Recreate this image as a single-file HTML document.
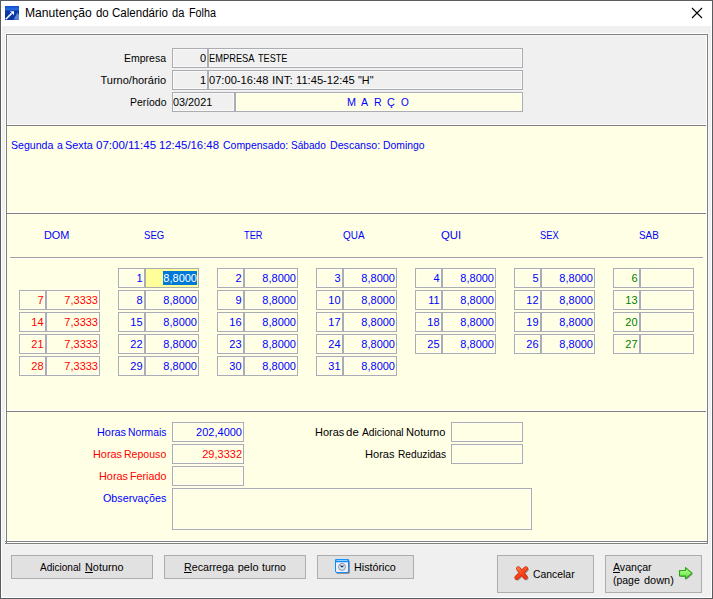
<!DOCTYPE html>
<html lang="pt-BR"><head><meta charset="utf-8"><title>Manutenção do Calendário da Folha</title>
<style>
html,body{margin:0;padding:0;}
body{width:713px;height:599px;overflow:hidden;position:relative;background:#f0f0f0;font-family:"Liberation Sans",sans-serif;}
#w{position:absolute;left:0;top:0;width:713px;height:599px;overflow:hidden;}
#w div,#w span,#w svg{position:absolute;}
.t{white-space:nowrap;font-size:11px;line-height:13px;}
.f{border:1px solid #abadb3;}
.b{border:1px solid #adadad;background:#e1e1e1;}
u{text-decoration:underline;text-underline-offset:1px;}
</style></head>
<body><div id="w">
<div style="left:0px;top:0px;width:713px;height:599px;background:#fff;"></div>
<div style="left:2px;top:26px;width:709px;height:571px;background:#f0f0f0;"></div>
<div style="left:0px;top:0px;width:713px;height:1px;background:#5a5d60;"></div>
<div style="left:0px;top:598px;width:713px;height:1px;background:#5a5d60;"></div>
<div style="left:0px;top:0px;width:1px;height:599px;background:#5a5d60;"></div>
<div style="left:712px;top:0px;width:1px;height:599px;background:#5a5d60;"></div>
<svg style="left:5px;top:6px" width="14" height="14" viewBox="0 0 14 14">
<defs><linearGradient id="gi" x1="0" y1="0" x2="0" y2="1"><stop offset="0" stop-color="#0d4fd0"/><stop offset="0.28" stop-color="#2f6fdc"/><stop offset="0.34" stop-color="#0a3aa8"/><stop offset="1" stop-color="#0433a6"/></linearGradient></defs>
<rect x="0" y="0" width="14" height="14" fill="url(#gi)"/>
<path d="M0.8 13.2 L6.6 7.4" stroke="#fff" stroke-width="1.5" fill="none"/>
<path d="M5 5.2 L9 5.2 L9 9.2 Z" fill="#fff"/>
<path d="M8.5 13.5 L12.5 6.5 L14 9 L14 14 Z" fill="#7f9ee0" opacity="0.75"/>
</svg>
<svg style="left:691px;top:7px" width="12" height="12" viewBox="0 0 12 12"><path d="M1 1 L11 11 M11 1 L1 11" stroke="#000" stroke-width="1.1" fill="none"/></svg>
<span id="title_0" class="t" style="top:5px;color:#000;left:24.99px;font-size:12px;line-height:16px;transform:scaleX(1.0104);transform-origin:0 0;">Manutenção</span>
<span id="title_1" class="t" style="top:5px;color:#000;left:95.50px;font-size:12px;line-height:16px;transform:scaleX(0.9549);transform-origin:0 0;">do</span>
<span id="title_2" class="t" style="top:5px;color:#000;left:112.04px;font-size:12px;line-height:16px;transform:scaleX(0.9626);transform-origin:0 0;">Calendário</span>
<span id="title_3" class="t" style="top:5px;color:#000;left:172.39px;font-size:12px;line-height:16px;transform:scaleX(0.9243);transform-origin:0 0;">da</span>
<span id="title_4" class="t" style="top:5px;color:#000;left:188.96px;font-size:12px;line-height:16px;transform:scaleX(0.8982);transform-origin:0 0;">Folha</span>
<div style="left:5px;top:33px;width:702px;height:1px;background:#fff;"></div>
<div style="left:5px;top:33px;width:1px;height:511px;background:#fff;"></div>
<div style="left:5px;top:544px;width:704px;height:1px;background:#f6f6f6;"></div>
<div style="left:708px;top:33px;width:1px;height:512px;background:#f6f6f6;"></div>
<div style="left:6px;top:34px;width:702px;height:510px;background:#808080;"></div>
<div style="left:7px;top:35px;width:700px;height:90px;background:#f7f7f7;"></div>
<div style="left:7px;top:124px;width:700px;height:1px;background:#fff;"></div>
<div style="left:706px;top:35px;width:1px;height:90px;background:#fff;"></div>
<div style="left:7px;top:35px;width:1px;height:1px;background:#fff;"></div>
<div style="left:8px;top:36px;width:698px;height:88px;background:#f0f0f0;"></div>
<div style="left:7px;top:126px;width:699px;height:86px;background:#ffffe6;"></div>
<div style="left:7px;top:212px;width:700px;height:1px;background:#fff;"></div>
<div style="left:706px;top:125px;width:1px;height:88px;background:#fff;"></div>
<div style="left:7px;top:214px;width:699px;height:196px;background:#ffffe6;"></div>
<div style="left:7px;top:410px;width:700px;height:1px;background:#fff;"></div>
<div style="left:706px;top:213px;width:1px;height:198px;background:#fff;"></div>
<div style="left:7px;top:412px;width:699px;height:128px;background:#ffffe6;"></div>
<div style="left:7px;top:540px;width:700px;height:1px;background:#fff;"></div>
<div style="left:706px;top:411px;width:1px;height:130px;background:#fff;"></div>
<div style="left:7px;top:542px;width:700px;height:1px;background:#fff;"></div>
<div style="left:5px;top:542px;width:1px;height:1px;background:#fff;"></div>
<div style="left:5px;top:541px;width:703px;height:1px;background:#808080;"></div>
<div style="left:5px;top:543px;width:703px;height:1px;background:#808080;"></div>
<span id="l_emp_0" class="t" style="top:52px;color:#000;left:124.44px;transform:scaleX(0.9543);transform-origin:0 0;">Empresa</span>
<span id="l_tur_0" class="t" style="top:74px;color:#000;left:100.50px;">Turno/horário</span>
<span id="l_per_0" class="t" style="top:96px;color:#000;left:130.16px;transform:scaleX(0.9457);transform-origin:0 0;">Período</span>
<div class="f" style="left:172px;top:48px;width:34px;height:18px;background:#f0f0f0;box-shadow:inset 0 0 0 1px #f8f8f8;"></div>
<div class="f" style="left:208px;top:48px;width:313px;height:18px;background:#f0f0f0;box-shadow:inset 0 0 0 1px #f8f8f8;"></div>
<div class="f" style="left:172px;top:70px;width:34px;height:18px;background:#f0f0f0;box-shadow:inset 0 0 0 1px #f8f8f8;"></div>
<div class="f" style="left:208px;top:70px;width:313px;height:18px;background:#f0f0f0;box-shadow:inset 0 0 0 1px #f8f8f8;"></div>
<div class="f" style="left:172px;top:92px;width:61px;height:18px;background:#f0f0f0;box-shadow:inset 0 0 0 1px #f8f8f8;"></div>
<div class="f" style="left:235px;top:92px;width:286px;height:18px;background:#ffffe6;box-shadow:inset 0 0 0 1px #fffff4;"></div>
<span id="v_0" class="t " style="top:52px;color:#000;right:507px;">0</span>
<span id="v_1" class="t " style="top:74px;color:#000;right:507px;">1</span>
<span id="v_emp_0" class="t" style="top:52px;color:#000;left:209.27px;transform:scaleX(0.8458);transform-origin:0 0;">EMPRESA</span>
<span id="v_emp_1" class="t" style="top:52px;color:#000;left:257.78px;transform:scaleX(0.8299);transform-origin:0 0;">TESTE</span>
<span id="v_tur_0" class="t" style="top:74px;color:#000;left:209.19px;transform:scaleX(1.0108);transform-origin:0 0;">07:00-16:48</span>
<span id="v_tur_1" class="t" style="top:74px;color:#000;left:271.96px;transform:scaleX(1.0574);transform-origin:0 0;">INT:</span>
<span id="v_tur_2" class="t" style="top:74px;color:#000;left:295.64px;transform:scaleX(1.0154);transform-origin:0 0;">11:45-12:45</span>
<span id="v_tur_3" class="t" style="top:74px;color:#000;left:358.34px;transform:scaleX(0.9838);transform-origin:0 0;">"H"</span>
<span id="v_per_0" class="t" style="top:96px;color:#000;left:172.98px;transform:scaleX(0.9856);transform-origin:0 0;">03/2021</span>
<span id="v_mes_0" class="t" style="top:96px;color:#00f;left:346.89px;transform:scaleX(0.9817);transform-origin:0 0;">M</span>
<span id="v_mes_1" class="t" style="top:96px;color:#00f;left:361.39px;transform:scaleX(0.9568);transform-origin:0 0;">A</span>
<span id="v_mes_2" class="t" style="top:96px;color:#00f;left:374.05px;transform:scaleX(0.9581);transform-origin:0 0;">R</span>
<span id="v_mes_3" class="t" style="top:96px;color:#00f;left:387.15px;transform:scaleX(0.9821);transform-origin:0 0;">Ç</span>
<span id="v_mes_4" class="t" style="top:96px;color:#00f;left:400.86px;transform:scaleX(0.9097);transform-origin:0 0;">O</span>
<span id="desc_0" class="t" style="top:139px;color:#00f;left:11.32px;transform:scaleX(0.9606);transform-origin:0 0;">Segunda</span>
<span id="desc_1" class="t" style="top:139px;color:#00f;left:57.28px;transform:scaleX(0.9506);transform-origin:0 0;">a</span>
<span id="desc_2" class="t" style="top:139px;color:#00f;left:65.09px;transform:scaleX(0.9848);transform-origin:0 0;">Sexta</span>
<span id="desc_3" class="t" style="top:139px;color:#00f;left:96.11px;transform:scaleX(1.0484);transform-origin:0 0;">07:00/11:45</span>
<span id="desc_4" class="t" style="top:139px;color:#00f;left:159.33px;transform:scaleX(1.0315);transform-origin:0 0;">12:45/16:48</span>
<span id="desc_5" class="t" style="top:139px;color:#00f;left:223.20px;transform:scaleX(0.9523);transform-origin:0 0;">Compensado:</span>
<span id="desc_6" class="t" style="top:139px;color:#00f;left:291.00px;transform:scaleX(0.9161);transform-origin:0 0;">Sábado</span>
<span id="desc_7" class="t" style="top:139px;color:#00f;left:330.03px;transform:scaleX(0.9655);transform-origin:0 0;">Descanso:</span>
<span id="desc_8" class="t" style="top:139px;color:#00f;left:382.72px;transform:scaleX(0.9443);transform-origin:0 0;">Domingo</span>
<span id="h_DOM_0" class="t" style="top:229px;color:#00f;left:44.15px;transform:scaleX(0.9901);transform-origin:0 0;">DOM</span>
<span id="h_SEG_0" class="t" style="top:229px;color:#00f;left:143.94px;transform:scaleX(0.8733);transform-origin:0 0;">SEG</span>
<span id="h_TER_0" class="t" style="top:229px;color:#00f;left:244.02px;transform:scaleX(0.8390);transform-origin:0 0;">TER</span>
<span id="h_QUA_0" class="t" style="top:229px;color:#00f;left:342.79px;transform:scaleX(0.9038);transform-origin:0 0;">QUA</span>
<span id="h_QUI_0" class="t" style="top:229px;color:#00f;left:441.31px;transform:scaleX(1.0306);transform-origin:0 0;">QUI</span>
<span id="h_SEX_0" class="t" style="top:229px;color:#00f;left:540.44px;transform:scaleX(0.8445);transform-origin:0 0;">SEX</span>
<span id="h_SAB_0" class="t" style="top:229px;color:#00f;left:639.38px;transform:scaleX(0.8994);transform-origin:0 0;">SAB</span>
<div style="left:10px;top:257px;width:693px;height:1px;background:#a0a0a0;"></div>
<div style="left:10px;top:258px;width:693px;height:1px;background:#fff;"></div>
<div class="f" style="left:118px;top:268px;width:25px;height:18px;background:#ffffe6;box-shadow:inset 0 0 0 1px #fffff4;"></div>
<div class="f" style="left:145px;top:268px;width:52px;height:18px;background:#ffff99;box-shadow:inset 0 0 0 1px #ffff99;"></div>
<span id="d1" class="t " style="top:272px;color:#00f;right:570.4px;">1</span>
<div style="left:163px;top:271px;width:34px;height:14px;background:#0078d7;"></div>
<span id="v1" class="t " style="top:272px;color:#fff;right:516px;">8,8000</span>
<div class="f" style="left:217px;top:268px;width:25px;height:18px;background:#ffffe6;box-shadow:inset 0 0 0 1px #fffff4;"></div>
<div class="f" style="left:244px;top:268px;width:52px;height:18px;background:#ffffe6;box-shadow:inset 0 0 0 1px #fffff4;"></div>
<span id="d2" class="t " style="top:272px;color:#00f;right:471.4px;">2</span>
<span id="v2" class="t " style="top:272px;color:#00f;right:417px;">8,8000</span>
<div class="f" style="left:316px;top:268px;width:25px;height:18px;background:#ffffe6;box-shadow:inset 0 0 0 1px #fffff4;"></div>
<div class="f" style="left:343px;top:268px;width:52px;height:18px;background:#ffffe6;box-shadow:inset 0 0 0 1px #fffff4;"></div>
<span id="d3" class="t " style="top:272px;color:#00f;right:372.4px;">3</span>
<span id="v3" class="t " style="top:272px;color:#00f;right:318px;">8,8000</span>
<div class="f" style="left:415px;top:268px;width:25px;height:18px;background:#ffffe6;box-shadow:inset 0 0 0 1px #fffff4;"></div>
<div class="f" style="left:442px;top:268px;width:52px;height:18px;background:#ffffe6;box-shadow:inset 0 0 0 1px #fffff4;"></div>
<span id="d4" class="t " style="top:272px;color:#00f;right:273.4px;">4</span>
<span id="v4" class="t " style="top:272px;color:#00f;right:219px;">8,8000</span>
<div class="f" style="left:514px;top:268px;width:25px;height:18px;background:#ffffe6;box-shadow:inset 0 0 0 1px #fffff4;"></div>
<div class="f" style="left:541px;top:268px;width:52px;height:18px;background:#ffffe6;box-shadow:inset 0 0 0 1px #fffff4;"></div>
<span id="d5" class="t " style="top:272px;color:#00f;right:174.39999999999998px;">5</span>
<span id="v5" class="t " style="top:272px;color:#00f;right:120px;">8,8000</span>
<div class="f" style="left:613px;top:268px;width:25px;height:18px;background:#ffffe6;box-shadow:inset 0 0 0 1px #fffff4;"></div>
<div class="f" style="left:640px;top:268px;width:52px;height:18px;background:#ffffe6;box-shadow:inset 0 0 0 1px #fffff4;"></div>
<span id="d6" class="t " style="top:272px;color:#008000;right:75.39999999999998px;">6</span>
<div class="f" style="left:19px;top:290px;width:25px;height:18px;background:#ffffe6;box-shadow:inset 0 0 0 1px #fffff4;"></div>
<div class="f" style="left:46px;top:290px;width:52px;height:18px;background:#ffffe6;box-shadow:inset 0 0 0 1px #fffff4;"></div>
<span id="d7" class="t " style="top:294px;color:#f00;right:669.4px;">7</span>
<span id="v7" class="t " style="top:294px;color:#f00;right:615px;">7,3333</span>
<div class="f" style="left:118px;top:290px;width:25px;height:18px;background:#ffffe6;box-shadow:inset 0 0 0 1px #fffff4;"></div>
<div class="f" style="left:145px;top:290px;width:52px;height:18px;background:#ffffe6;box-shadow:inset 0 0 0 1px #fffff4;"></div>
<span id="d8" class="t " style="top:294px;color:#00f;right:570.4px;">8</span>
<span id="v8" class="t " style="top:294px;color:#00f;right:516px;">8,8000</span>
<div class="f" style="left:217px;top:290px;width:25px;height:18px;background:#ffffe6;box-shadow:inset 0 0 0 1px #fffff4;"></div>
<div class="f" style="left:244px;top:290px;width:52px;height:18px;background:#ffffe6;box-shadow:inset 0 0 0 1px #fffff4;"></div>
<span id="d9" class="t " style="top:294px;color:#00f;right:471.4px;">9</span>
<span id="v9" class="t " style="top:294px;color:#00f;right:417px;">8,8000</span>
<div class="f" style="left:316px;top:290px;width:25px;height:18px;background:#ffffe6;box-shadow:inset 0 0 0 1px #fffff4;"></div>
<div class="f" style="left:343px;top:290px;width:52px;height:18px;background:#ffffe6;box-shadow:inset 0 0 0 1px #fffff4;"></div>
<span id="d10" class="t " style="top:294px;color:#00f;right:372.4px;">10</span>
<span id="v10" class="t " style="top:294px;color:#00f;right:318px;">8,8000</span>
<div class="f" style="left:415px;top:290px;width:25px;height:18px;background:#ffffe6;box-shadow:inset 0 0 0 1px #fffff4;"></div>
<div class="f" style="left:442px;top:290px;width:52px;height:18px;background:#ffffe6;box-shadow:inset 0 0 0 1px #fffff4;"></div>
<span id="d11" class="t " style="top:294px;color:#00f;right:273.4px;">11</span>
<span id="v11" class="t " style="top:294px;color:#00f;right:219px;">8,8000</span>
<div class="f" style="left:514px;top:290px;width:25px;height:18px;background:#ffffe6;box-shadow:inset 0 0 0 1px #fffff4;"></div>
<div class="f" style="left:541px;top:290px;width:52px;height:18px;background:#ffffe6;box-shadow:inset 0 0 0 1px #fffff4;"></div>
<span id="d12" class="t " style="top:294px;color:#00f;right:174.39999999999998px;">12</span>
<span id="v12" class="t " style="top:294px;color:#00f;right:120px;">8,8000</span>
<div class="f" style="left:613px;top:290px;width:25px;height:18px;background:#ffffe6;box-shadow:inset 0 0 0 1px #fffff4;"></div>
<div class="f" style="left:640px;top:290px;width:52px;height:18px;background:#ffffe6;box-shadow:inset 0 0 0 1px #fffff4;"></div>
<span id="d13" class="t " style="top:294px;color:#008000;right:75.39999999999998px;">13</span>
<div class="f" style="left:19px;top:312px;width:25px;height:18px;background:#ffffe6;box-shadow:inset 0 0 0 1px #fffff4;"></div>
<div class="f" style="left:46px;top:312px;width:52px;height:18px;background:#ffffe6;box-shadow:inset 0 0 0 1px #fffff4;"></div>
<span id="d14" class="t " style="top:316px;color:#f00;right:669.4px;">14</span>
<span id="v14" class="t " style="top:316px;color:#f00;right:615px;">7,3333</span>
<div class="f" style="left:118px;top:312px;width:25px;height:18px;background:#ffffe6;box-shadow:inset 0 0 0 1px #fffff4;"></div>
<div class="f" style="left:145px;top:312px;width:52px;height:18px;background:#ffffe6;box-shadow:inset 0 0 0 1px #fffff4;"></div>
<span id="d15" class="t " style="top:316px;color:#00f;right:570.4px;">15</span>
<span id="v15" class="t " style="top:316px;color:#00f;right:516px;">8,8000</span>
<div class="f" style="left:217px;top:312px;width:25px;height:18px;background:#ffffe6;box-shadow:inset 0 0 0 1px #fffff4;"></div>
<div class="f" style="left:244px;top:312px;width:52px;height:18px;background:#ffffe6;box-shadow:inset 0 0 0 1px #fffff4;"></div>
<span id="d16" class="t " style="top:316px;color:#00f;right:471.4px;">16</span>
<span id="v16" class="t " style="top:316px;color:#00f;right:417px;">8,8000</span>
<div class="f" style="left:316px;top:312px;width:25px;height:18px;background:#ffffe6;box-shadow:inset 0 0 0 1px #fffff4;"></div>
<div class="f" style="left:343px;top:312px;width:52px;height:18px;background:#ffffe6;box-shadow:inset 0 0 0 1px #fffff4;"></div>
<span id="d17" class="t " style="top:316px;color:#00f;right:372.4px;">17</span>
<span id="v17" class="t " style="top:316px;color:#00f;right:318px;">8,8000</span>
<div class="f" style="left:415px;top:312px;width:25px;height:18px;background:#ffffe6;box-shadow:inset 0 0 0 1px #fffff4;"></div>
<div class="f" style="left:442px;top:312px;width:52px;height:18px;background:#ffffe6;box-shadow:inset 0 0 0 1px #fffff4;"></div>
<span id="d18" class="t " style="top:316px;color:#00f;right:273.4px;">18</span>
<span id="v18" class="t " style="top:316px;color:#00f;right:219px;">8,8000</span>
<div class="f" style="left:514px;top:312px;width:25px;height:18px;background:#ffffe6;box-shadow:inset 0 0 0 1px #fffff4;"></div>
<div class="f" style="left:541px;top:312px;width:52px;height:18px;background:#ffffe6;box-shadow:inset 0 0 0 1px #fffff4;"></div>
<span id="d19" class="t " style="top:316px;color:#00f;right:174.39999999999998px;">19</span>
<span id="v19" class="t " style="top:316px;color:#00f;right:120px;">8,8000</span>
<div class="f" style="left:613px;top:312px;width:25px;height:18px;background:#ffffe6;box-shadow:inset 0 0 0 1px #fffff4;"></div>
<div class="f" style="left:640px;top:312px;width:52px;height:18px;background:#ffffe6;box-shadow:inset 0 0 0 1px #fffff4;"></div>
<span id="d20" class="t " style="top:316px;color:#008000;right:75.39999999999998px;">20</span>
<div class="f" style="left:19px;top:334px;width:25px;height:18px;background:#ffffe6;box-shadow:inset 0 0 0 1px #fffff4;"></div>
<div class="f" style="left:46px;top:334px;width:52px;height:18px;background:#ffffe6;box-shadow:inset 0 0 0 1px #fffff4;"></div>
<span id="d21" class="t " style="top:338px;color:#f00;right:669.4px;">21</span>
<span id="v21" class="t " style="top:338px;color:#f00;right:615px;">7,3333</span>
<div class="f" style="left:118px;top:334px;width:25px;height:18px;background:#ffffe6;box-shadow:inset 0 0 0 1px #fffff4;"></div>
<div class="f" style="left:145px;top:334px;width:52px;height:18px;background:#ffffe6;box-shadow:inset 0 0 0 1px #fffff4;"></div>
<span id="d22" class="t " style="top:338px;color:#00f;right:570.4px;">22</span>
<span id="v22" class="t " style="top:338px;color:#00f;right:516px;">8,8000</span>
<div class="f" style="left:217px;top:334px;width:25px;height:18px;background:#ffffe6;box-shadow:inset 0 0 0 1px #fffff4;"></div>
<div class="f" style="left:244px;top:334px;width:52px;height:18px;background:#ffffe6;box-shadow:inset 0 0 0 1px #fffff4;"></div>
<span id="d23" class="t " style="top:338px;color:#00f;right:471.4px;">23</span>
<span id="v23" class="t " style="top:338px;color:#00f;right:417px;">8,8000</span>
<div class="f" style="left:316px;top:334px;width:25px;height:18px;background:#ffffe6;box-shadow:inset 0 0 0 1px #fffff4;"></div>
<div class="f" style="left:343px;top:334px;width:52px;height:18px;background:#ffffe6;box-shadow:inset 0 0 0 1px #fffff4;"></div>
<span id="d24" class="t " style="top:338px;color:#00f;right:372.4px;">24</span>
<span id="v24" class="t " style="top:338px;color:#00f;right:318px;">8,8000</span>
<div class="f" style="left:415px;top:334px;width:25px;height:18px;background:#ffffe6;box-shadow:inset 0 0 0 1px #fffff4;"></div>
<div class="f" style="left:442px;top:334px;width:52px;height:18px;background:#ffffe6;box-shadow:inset 0 0 0 1px #fffff4;"></div>
<span id="d25" class="t " style="top:338px;color:#00f;right:273.4px;">25</span>
<span id="v25" class="t " style="top:338px;color:#00f;right:219px;">8,8000</span>
<div class="f" style="left:514px;top:334px;width:25px;height:18px;background:#ffffe6;box-shadow:inset 0 0 0 1px #fffff4;"></div>
<div class="f" style="left:541px;top:334px;width:52px;height:18px;background:#ffffe6;box-shadow:inset 0 0 0 1px #fffff4;"></div>
<span id="d26" class="t " style="top:338px;color:#00f;right:174.39999999999998px;">26</span>
<span id="v26" class="t " style="top:338px;color:#00f;right:120px;">8,8000</span>
<div class="f" style="left:613px;top:334px;width:25px;height:18px;background:#ffffe6;box-shadow:inset 0 0 0 1px #fffff4;"></div>
<div class="f" style="left:640px;top:334px;width:52px;height:18px;background:#ffffe6;box-shadow:inset 0 0 0 1px #fffff4;"></div>
<span id="d27" class="t " style="top:338px;color:#008000;right:75.39999999999998px;">27</span>
<div class="f" style="left:19px;top:356px;width:25px;height:18px;background:#ffffe6;box-shadow:inset 0 0 0 1px #fffff4;"></div>
<div class="f" style="left:46px;top:356px;width:52px;height:18px;background:#ffffe6;box-shadow:inset 0 0 0 1px #fffff4;"></div>
<span id="d28" class="t " style="top:360px;color:#f00;right:669.4px;">28</span>
<span id="v28" class="t " style="top:360px;color:#f00;right:615px;">7,3333</span>
<div class="f" style="left:118px;top:356px;width:25px;height:18px;background:#ffffe6;box-shadow:inset 0 0 0 1px #fffff4;"></div>
<div class="f" style="left:145px;top:356px;width:52px;height:18px;background:#ffffe6;box-shadow:inset 0 0 0 1px #fffff4;"></div>
<span id="d29" class="t " style="top:360px;color:#00f;right:570.4px;">29</span>
<span id="v29" class="t " style="top:360px;color:#00f;right:516px;">8,8000</span>
<div class="f" style="left:217px;top:356px;width:25px;height:18px;background:#ffffe6;box-shadow:inset 0 0 0 1px #fffff4;"></div>
<div class="f" style="left:244px;top:356px;width:52px;height:18px;background:#ffffe6;box-shadow:inset 0 0 0 1px #fffff4;"></div>
<span id="d30" class="t " style="top:360px;color:#00f;right:471.4px;">30</span>
<span id="v30" class="t " style="top:360px;color:#00f;right:417px;">8,8000</span>
<div class="f" style="left:316px;top:356px;width:25px;height:18px;background:#ffffe6;box-shadow:inset 0 0 0 1px #fffff4;"></div>
<div class="f" style="left:343px;top:356px;width:52px;height:18px;background:#ffffe6;box-shadow:inset 0 0 0 1px #fffff4;"></div>
<span id="d31" class="t " style="top:360px;color:#00f;right:372.4px;">31</span>
<span id="v31" class="t " style="top:360px;color:#00f;right:318px;">8,8000</span>
<span id="l_hn_0" class="t" style="top:426px;color:#00f;left:96.62px;transform:scaleX(0.9904);transform-origin:0 0;">Horas</span>
<span id="l_hn_1" class="t" style="top:426px;color:#00f;left:128.46px;transform:scaleX(0.9357);transform-origin:0 0;">Normais</span>
<span id="l_hr_0" class="t" style="top:448px;color:#f00;left:92.78px;transform:scaleX(0.9903);transform-origin:0 0;">Horas</span>
<span id="l_hr_1" class="t" style="top:448px;color:#f00;left:124.42px;transform:scaleX(0.9594);transform-origin:0 0;">Repouso</span>
<span id="l_hf_0" class="t" style="top:470px;color:#f00;left:98.98px;transform:scaleX(0.9874);transform-origin:0 0;">Horas</span>
<span id="l_hf_1" class="t" style="top:470px;color:#f00;left:130.22px;transform:scaleX(0.9760);transform-origin:0 0;">Feriado</span>
<span id="l_ob_0" class="t" style="top:492px;color:#00f;left:103.32px;transform:scaleX(0.9763);transform-origin:0 0;">Observações</span>
<div class="f" style="left:172px;top:422px;width:70px;height:18px;background:#ffffe6;box-shadow:inset 0 0 0 1px #fffff4;"></div>
<div class="f" style="left:172px;top:444px;width:70px;height:18px;background:#ffffe6;box-shadow:inset 0 0 0 1px #fffff4;"></div>
<div class="f" style="left:172px;top:466px;width:70px;height:18px;background:#ffffe6;box-shadow:inset 0 0 0 1px #fffff4;"></div>
<div class="f" style="left:172px;top:488px;width:358px;height:40px;background:#ffffe6;box-shadow:inset 0 0 0 1px #fffff4;"></div>
<span id="v_hn" class="t " style="top:426px;color:#00f;right:471px;">202,4000</span>
<span id="v_hr" class="t " style="top:448px;color:#f00;right:471px;">29,3332</span>
<span id="l_an_0" class="t" style="top:426px;color:#000;left:314.60px;transform:scaleX(0.9991);transform-origin:0 0;">Horas</span>
<span id="l_an_1" class="t" style="top:426px;color:#000;left:346.04px;transform:scaleX(1.0424);transform-origin:0 0;">de</span>
<span id="l_an_2" class="t" style="top:426px;color:#000;left:361.75px;transform:scaleX(0.9329);transform-origin:0 0;">Adicional</span>
<span id="l_an_3" class="t" style="top:426px;color:#000;left:405.67px;transform:scaleX(1.0077);transform-origin:0 0;">Noturno</span>
<span id="l_rd_0" class="t" style="top:448px;color:#000;left:365.27px;transform:scaleX(1.0078);transform-origin:0 0;">Horas</span>
<span id="l_rd_1" class="t" style="top:448px;color:#000;left:398.02px;transform:scaleX(0.9248);transform-origin:0 0;">Reduzidas</span>
<div class="f" style="left:451px;top:422px;width:70px;height:18px;background:#ffffe6;box-shadow:inset 0 0 0 1px #fffff4;"></div>
<div class="f" style="left:451px;top:444px;width:70px;height:18px;background:#ffffe6;box-shadow:inset 0 0 0 1px #fffff4;"></div>
<div class="b" style="left:11px;top:555px;width:140px;height:22px;"></div>
<div class="b" style="left:164px;top:555px;width:140px;height:22px;"></div>
<div class="b" style="left:317px;top:555px;width:95px;height:22px;"></div>
<div class="b" style="left:497px;top:555px;width:95px;height:36px;"></div>
<div class="b" style="left:605px;top:555px;width:95px;height:36px;"></div>
<span id="b_an_0" class="t" style="top:561px;color:#000;left:39.76px;transform:scaleX(0.9137);transform-origin:0 0;">Adicional</span>
<span id="b_an_1" class="t" style="top:561px;color:#000;left:84.56px;transform:scaleX(0.9876);transform-origin:0 0;"><u>N</u>oturno</span>
<span id="b_rt_0" class="t" style="top:561px;color:#000;left:183.72px;transform:scaleX(0.9699);transform-origin:0 0;"><u>R</u>ecarrega</span>
<span id="b_rt_1" class="t" style="top:561px;color:#000;left:237.71px;">pelo</span>
<span id="b_rt_2" class="t" style="top:561px;color:#000;left:262.43px;transform:scaleX(0.9506);transform-origin:0 0;">turno</span>
<span id="b_hi_0" class="t" style="top:561px;color:#000;left:353.97px;transform:scaleX(0.9761);transform-origin:0 0;">Histórico</span>
<span id="b_ca_0" class="t" style="top:568px;color:#000;left:533.45px;transform:scaleX(0.9454);transform-origin:0 0;">Cancelar</span>
<span id="b_av_0" class="t" style="top:561px;color:#000;left:612.60px;transform:scaleX(0.9619);transform-origin:0 0;"><u>A</u>vançar</span>
<span id="b_pd_0" class="t" style="top:574px;color:#000;left:612.70px;transform:scaleX(0.9506);transform-origin:0 0;">(page</span>
<span id="b_pd_1" class="t" style="top:574px;color:#000;left:643.53px;transform:scaleX(0.9951);transform-origin:0 0;">down)</span>
<svg style="left:335px;top:559px" width="16" height="16" viewBox="0 0 16 16">
<rect x="1.2" y="1.2" width="13.6" height="13.6" rx="1.6" fill="#3a3a44" opacity="0.6"/>
<rect x="0.5" y="0.5" width="13" height="13" rx="1.4" fill="#f3eeff" stroke="#0a8cff" stroke-width="1"/>
<rect x="0" y="0" width="14" height="3.2" rx="1.2" fill="#0a8cff"/>
<path d="M1.4 1.4 L12.6 1.4" stroke="#c4e4ff" stroke-width="0.8" fill="none"/>
<circle cx="7" cy="7.9" r="3.5" fill="#c8edf8" stroke="#8b8a9c" stroke-width="0.9"/>
<path d="M5.5 6.3 L7 7.9 L8.5 6.6" stroke="#2c2c34" stroke-width="1.1" fill="none"/>
</svg>
<svg style="left:513px;top:565px" width="18" height="18" viewBox="0 0 18 18">
<defs><linearGradient id="gx" x1="0" y1="0" x2="0.6" y2="1"><stop offset="0" stop-color="#ff7a48"/><stop offset="0.55" stop-color="#f9481c"/><stop offset="1" stop-color="#ee3a10"/></linearGradient></defs>
<path d="M5.3 3.6 L12.4 12.2 M12.8 3.6 L3.6 12.6" stroke="#3c4a4a" stroke-width="4.4" stroke-linecap="round" fill="none" opacity="0.45" transform="translate(0.9,0.9)"/>
<path d="M5.3 3.6 L12.4 12.2 M12.8 3.6 L3.6 12.6" stroke="#d3200a" stroke-width="4.5" stroke-linecap="round" fill="none"/>
<path d="M5.3 3.6 L12.4 12.2 M12.8 3.6 L3.6 12.6" stroke="url(#gx)" stroke-width="3.2" stroke-linecap="round" fill="none"/>
</svg>
<svg style="left:678px;top:566px" width="17" height="16" viewBox="0 0 17 16">
<defs><linearGradient id="ga" x1="0" y1="0" x2="0" y2="1"><stop offset="0" stop-color="#7be85a"/><stop offset="0.5" stop-color="#8ef46a"/><stop offset="1" stop-color="#4fd030"/></linearGradient></defs>
<path d="M1.5 4.5 L7.5 4.5 L7.5 1.6 L14 7.2 L7.5 12.9 L7.5 10 L1.5 10 Z" fill="#3a2a44" opacity="0.5" transform="translate(0.9,0.9)"/>
<path d="M1.5 4.5 L7.5 4.5 L7.5 1.6 L14 7.2 L7.5 12.9 L7.5 10 L1.5 10 Z" fill="url(#ga)" stroke="#2ba516" stroke-width="1.1" stroke-linejoin="round"/>
<path d="M2.6 5.8 L8.4 5.8 L8.6 4 L11.6 7" stroke="#b4fa96" stroke-width="0.9" fill="none" opacity="0.8"/>
</svg>
</div></body></html>
